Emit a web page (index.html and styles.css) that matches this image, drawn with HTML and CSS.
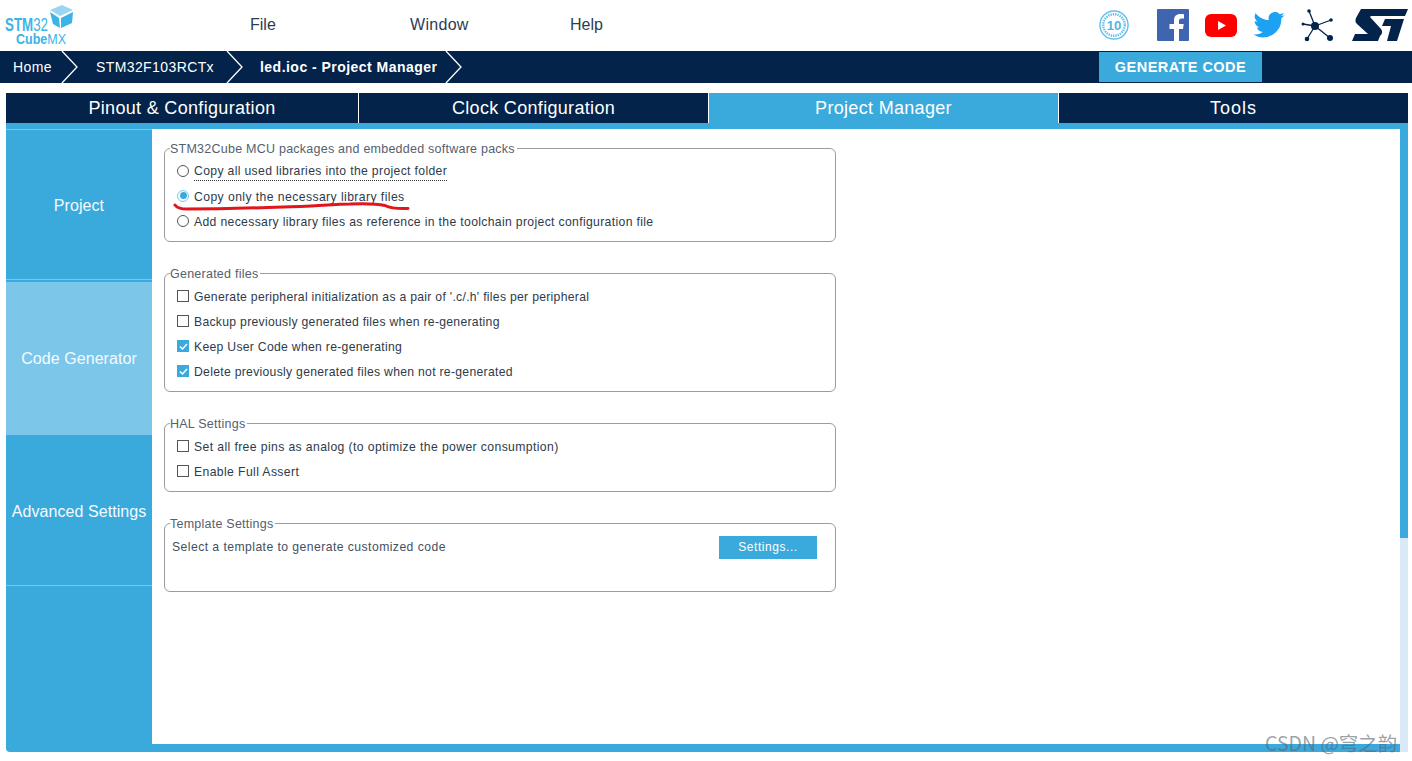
FILE: index.html
```html
<!DOCTYPE html>
<html lang="en">
<head>
<meta charset="utf-8">
<title>STM32CubeMX</title>
<link rel="stylesheet" href="styles.css">
</head>
<body>
<header class="top">
  <svg class="logo" width="250" height="51" viewBox="0 0 250 51">
    <text class="lg-r" x="5" y="31" font-size="18" textLength="43" lengthAdjust="spacingAndGlyphs"><tspan class="lg-b">STM</tspan>32</text>
    <text class="lg-r" x="16" y="44" font-size="15" textLength="50" lengthAdjust="spacingAndGlyphs"><tspan class="lg-b">Cube</tspan>MX</text>
    <path d="M50 10L62 5 73 10 60 16Z" fill="#9ad6f2"/>
    <path d="M50 12L59 18 60 28 53 24Z" fill="#3cb4e6"/>
    <path d="M61 18L73 12 72 23 61 28Z" fill="#3cb4e6"/>
  </svg>
  <nav class="menu"><span class="m1">File</span><span class="m2">Window</span><span class="m3">Help</span></nav>
  <div class="social">
    <svg class="i-ten" width="30" height="30" viewBox="0 0 32 32"><circle cx="16" cy="16" r="15" fill="none" stroke="#62bfe9" stroke-width="1.500"/><circle cx="16" cy="16" r="11.500" fill="none" stroke="#62bfe9" stroke-width="2.500" stroke-dasharray="1.500 1"/><text x="16" y="21" text-anchor="middle" class="ten">10</text></svg>
    <svg class="i-fb" width="32" height="32" viewBox="0 0 32 32"><rect width="32" height="32" rx="1" fill="#3f65b0"/><path d="M22 32V20h4l.7-5H22v-3c0-1.500.7-2.500 2.600-2.500H27V5.200C26 5 24.700 5 23.300 5 19.500 5 17 7.200 17 11.300V15h-4.500v5H17v12Z" fill="#fff"/></svg>
    <svg class="i-yt" width="32" height="23" viewBox="0 0 32 23"><rect width="32" height="23" rx="6" fill="#f00"/><path d="M13 7L21 11.500 13 16Z" fill="#fff"/></svg>
    <svg class="i-tw" width="32" height="26" viewBox="0 0 24 20"><path d="M24 2.400c-.9.400-1.800.7-2.800.8 1-.6 1.800-1.600 2.200-2.700-1 .6-2 1-3.100 1.200A4.900 4.900 0 0 0 11.900 6.200C7.800 6 4.200 4 1.700.9a4.900 4.900 0 0 0 1.500 6.600c-.8 0-1.600-.2-2.200-.6 0 2.400 1.700 4.400 3.900 4.900-.7.200-1.500.2-2.200.1.600 2 2.400 3.400 4.600 3.400A9.900 9.900 0 0 1 0 17.300 14 14 0 0 0 21.500 4.900c1-.7 1.800-1.500 2.500-2.500Z" fill="#1da1f2"/></svg>
    <svg class="i-net" width="33" height="33" viewBox="0 0 33 33"><g stroke="#03234b" stroke-width="1.300"><path d="M14 17L8 2M14 17L30 11M14 17L2 15M14 17L6 30M14 17L29 29"/></g><g fill="#03234b"><circle cx="14" cy="17" r="4"/><circle cx="8" cy="2" r="1.800"/><circle cx="30" cy="11" r="1.800"/><circle cx="2" cy="15" r="1.500"/><circle cx="6" cy="30" r="2.300"/><circle cx="29" cy="29" r="3"/></g></svg>
    <svg class="i-st" width="56" height="32" viewBox="0 0 56 32"><path d="M9 0H56L53 7H19L18 8 29 20C31 23 30 25 28 27L26 32H0L3 25H16L5 15C3 13 3 11 4.500 8Z" fill="#03234b"/><path d="M33 10H52L45 32H35L39 17H30Z" fill="#03234b"/></svg>
  </div>
</header>

<div class="crumbs">
  <span class="crumb c-home">Home</span>
  <svg class="chev" width="18" height="32" viewBox="0 0 18 32"><path d="M1 0L16 16 1 32" fill="none" stroke="#fff" stroke-width="1.300"/></svg>
  <span class="crumb c-mcu">STM32F103RCTx</span>
  <svg class="chev" width="18" height="32" viewBox="0 0 18 32"><path d="M1 0L16 16 1 32" fill="none" stroke="#fff" stroke-width="1.300"/></svg>
  <span class="crumb c-cur">led.ioc - Project Manager</span>
  <svg class="chev" width="18" height="32" viewBox="0 0 18 32"><path d="M1 0L16 16 1 32" fill="none" stroke="#fff" stroke-width="1.300"/></svg>
  <button class="generate">GENERATE CODE</button>
</div>

<div class="tabs">
  <div class="tab">Pinout &amp; Configuration</div>
  <div class="tab">Clock Configuration</div>
  <div class="tab active">Project Manager</div>
  <div class="tab tools">Tools</div>
</div>

<main class="panel">
  <aside class="side">
    <div class="side-item s1">Project</div>
    <div class="side-item s2">Code Generator</div>
    <div class="side-item s3">Advanced Settings</div>
  </aside>
  <section class="content">
    <fieldset class="group g1">
      <legend>STM32Cube MCU packages and embedded software packs</legend>
      <div class="row"><span class="radio"></span><span class="focus">Copy all used libraries into the project folder</span></div>
      <div class="row wide"><span class="radio on"></span><span>Copy only the necessary library files</span></div>
      <div class="row"><span class="radio"></span><span>Add necessary library files as reference in the toolchain project configuration file</span></div>
    </fieldset>
    <fieldset class="group g2">
      <legend>Generated files</legend>
      <div class="row"><span class="check"></span><span>Generate peripheral initialization as a pair of '.c/.h' files per peripheral</span></div>
      <div class="row"><span class="check"></span><span>Backup previously generated files when re-generating</span></div>
      <div class="row"><span class="check on"><svg width="13" height="13" viewBox="0 0 13 13"><path d="M3 6.500L5.500 9 10 4" fill="none" stroke="#fff" stroke-width="1.500"/></svg></span><span>Keep User Code when re-generating</span></div>
      <div class="row"><span class="check on"><svg width="13" height="13" viewBox="0 0 13 13"><path d="M3 6.500L5.500 9 10 4" fill="none" stroke="#fff" stroke-width="1.500"/></svg></span><span>Delete previously generated files when not re-generated</span></div>
    </fieldset>
    <fieldset class="group g3">
      <legend>HAL Settings</legend>
      <div class="row"><span class="check"></span><span>Set all free pins as analog (to optimize the power consumption)</span></div>
      <div class="row"><span class="check"></span><span>Enable Full Assert</span></div>
    </fieldset>
    <fieldset class="group g4">
      <legend>Template Settings</legend>
      <div class="tpl"><span>Select a template to generate customized code</span><button class="settings">Settings...</button></div>
    </fieldset>
    <svg class="scribble" width="240" height="16" viewBox="0 0 240 16"><path d="M2 5C4 8 8 9 14 9C50 9 80 8 110 7C140 6 165 4 177 4C190 3.500 205 4 212 5.500C217 8 222 9 235 8.500" fill="none" stroke="#e2141c" stroke-width="3" stroke-linecap="round"/></svg>
  </section>
  <div class="scroll"><div class="scroll-rest"></div></div>
</main>
<div class="watermark">CSDN @穹之韵</div>
</body>
</html>
```

FILE: styles.css
```css
* { box-sizing: border-box; }
html, body { margin: 0; padding: 0; }
body {
  position: relative;
  width: 1412px;
  height: 761px;
  overflow: hidden;
  background: #fff;
  font-family: "Liberation Sans", Arial, sans-serif;
}
.top { height: 51px; display: flex; align-items: center; position: relative; }
.logo { flex: none; display: block; }
.lg-r { font-family: "Liberation Sans", sans-serif; font-weight: 400; fill: #3cb4e6; }
.lg-b { font-weight: 700; }
.menu { display: flex; font-size: 16px; color: #2b3c55; padding-bottom: 2px; }
.menu span { display: block; }
.m1 { width: 160px; }
.m2 { width: 160px; letter-spacing: .3px; }
.social { margin-left: auto; display: flex; align-items: center; padding: 0 4px 1px 0; height: 51px; }
.i-ten { margin-right: 28px; }
.ten { font: 700 14px "Liberation Sans", sans-serif; fill: #4fb6e5; }
.i-fb { margin-right: 16px; }
.i-yt { margin-right: 16px; }
.i-tw { margin-right: 16px; }
.i-net { margin-right: 18px; }

.crumbs { height: 32px; background: #03234b; display: flex; align-items: center; color: #fff; font-size: 14px; position: relative; }
.crumb { display: block; }
.c-home { margin-left: 13px; width: 48px; letter-spacing: .4px; }
.c-mcu { margin-left: 17px; width: 130px; letter-spacing: .4px; }
.c-cur { margin-left: 16px; font-weight: 700; width: 185px; letter-spacing: .47px; }
.chev { flex: none; }
.generate {
  margin-left: auto; margin-right: 150px; width: 163px; height: 30px; border: 0;
  background: #3aa9dc; color: #fff; font: 700 14.500px "Liberation Sans", sans-serif; letter-spacing: .45px; padding: 0;
}

.tabs { display: flex; margin: 10px 0 0 6px; width: 1402px; height: 30px; background: #03234b; }
.tab { flex: 1 1 0; text-align: center; color: #fff; font-size: 18px; line-height: 31px; letter-spacing: .32px; border-left: 1px solid #fff; }
.tab:first-child { flex: 0 0 352px; border-left: 0; }
.tab.active { background: #3aa9dc; }
.tab.tools { letter-spacing: 1px; }

.panel {
  margin: 0 0 0 6px; width: 1402px; height: 629px;
  display: flex; background: #3aa9dc; padding-top: 6px; padding-bottom: 8px; position: relative;
  border-bottom-left-radius: 4px;
}
.side { width: 146px; flex: none; display: flex; flex-direction: column; color: #f4fbff; font-size: 16px; letter-spacing: .07px; }
.side-item { display: flex; align-items: center; justify-content: center; border-bottom: 1px solid #7cc6ea; }
.s1 { height: 151px; border-top: 1px solid #7cc6ea; padding-top: 2px; }
.s2 { height: 153px; margin-top: 2px; background: #7cc6ea; border-bottom: 0; border-top: 1px solid #7cc6ea; }
.s3 { height: 151px; padding-top: 3px; }
.content { width: 1248px; background: #fff; position: relative; padding: 11px 0 0 12px; }
.scroll { width: 8px; flex: none; background: #3aa9dc; margin-bottom: -8px; position: relative; }
.scroll-rest { position: absolute; left: 0; right: 0; top: 409px; bottom: 0; background: #d9e9f7; }

.group {
  margin: 0 0 23px; padding: 0 0 0 12px; width: 672px;
  border: 1px solid #9a9da0; border-radius: 6px; color: #3f4a59; font-size: 12px;
}
.group legend { padding: 2px 2px 0 0; margin-left: -7px; font-size: 12.500px; letter-spacing: .24px; color: #55606e; line-height: 14px; }
.g1 { height: 102px; }
.g2 { height: 127px; }
.g3 { height: 77px; }
.g4 { height: 77px; }
.row { height: 25px; display: flex; align-items: center; font-size: 12.200px; letter-spacing: .34px; color: #2e3a4a; }
.row:first-of-type { margin-top: 3px; }
.row.wide { letter-spacing: .42px; }
.g2 .row { letter-spacing: .29px; }
.g3 .row { letter-spacing: .39px; }
.radio, .check { width: 12px; height: 12px; flex: none; margin: 0 5px 2px 0; position: relative; }
.radio { border: 1px solid #555; border-radius: 50%; background: #fff; }
.radio.on { border-color: #7cc6ea; }
.radio.on::after { content: ""; position: absolute; left: 1.500px; top: 1.500px; width: 7px; height: 7px; border-radius: 50%; background: #3aa9dc; }
.check { border: 1px solid #555; }
.check.on { border: 0; background: #3aa9dc; }
.check.on svg { display: block; }
.focus { border-bottom: 1px dotted #333; line-height: 17px; }
.tpl { display: flex; justify-content: space-between; align-items: center; padding: 4px 18px 0 0; margin-left: -5px; height: 28px; font-size: 12.200px; letter-spacing: .44px; color: #44505f; }
.settings { width: 98px; height: 23px; border: 0; background: #3aa9dc; color: #fff; font: 12px "Liberation Sans", sans-serif; letter-spacing: .55px; padding: 0; }
.scribble { position: absolute; left: 21px; top: 71px; }

.watermark { position: absolute; left: 1265px; top: 730px; font: 19.500px "Noto Sans CJK SC", "Liberation Sans", sans-serif; color: rgba(90,100,110,.6); line-height: 26px; }
```
